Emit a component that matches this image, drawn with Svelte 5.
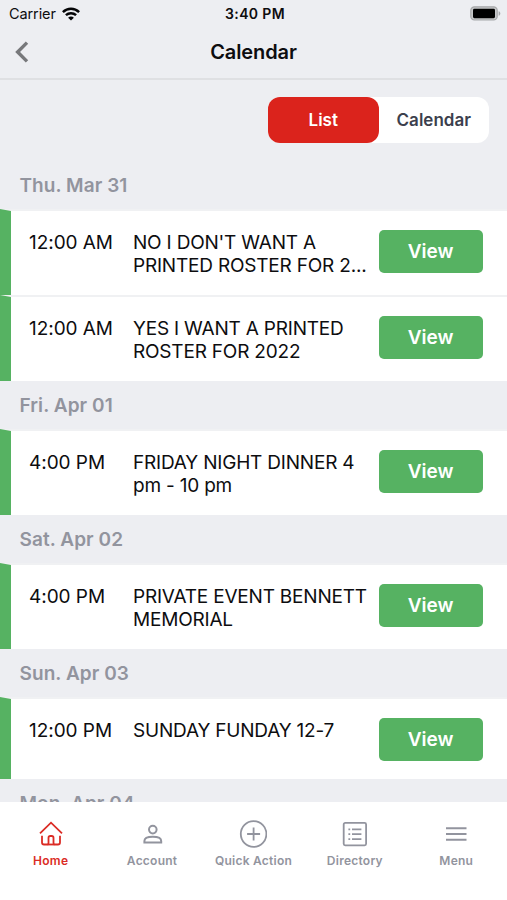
<script lang="ts">
  type CalendarEvent = { time: string; title: string };
  type Day = { label: string; events: CalendarEvent[] };

  const days: Day[] = [
    {
      label: 'Thu. Mar 31',
      events: [
        { time: '12:00 AM', title: "NO I DON'T WANT A PRINTED ROSTER FOR\u00a02..." },
        { time: '12:00 AM', title: 'YES I WANT A PRINTED ROSTER FOR 2022' },
      ],
    },
    { label: 'Fri. Apr 01', events: [{ time: '4:00 PM', title: 'FRIDAY NIGHT DINNER 4 pm - 10 pm' }] },
    { label: 'Sat. Apr 02', events: [{ time: '4:00 PM', title: 'PRIVATE EVENT BENNETT MEMORIAL' }] },
    { label: 'Sun. Apr 03', events: [{ time: '12:00 PM', title: 'SUNDAY FUNDAY 12-7' }] },
    { label: 'Mon. Apr 04', events: [] },
  ];

  const tabs = ['Home', 'Account', 'Quick Action', 'Directory', 'Menu'];

  let activeTab = $state('Home');
  let view = $state('List');
</script>

<div class="screen">
  <div class="status">
    <div class="status-left">
      <span class="carrier">Carrier</span>
      <svg width="18" height="14" viewBox="0 0 18 14" fill="none" stroke="#050507" stroke-width="2.5">
        <path d="M.9 5.1C5.5.7 12.5.7 17.1 5.1" />
        <path d="M3.9 8.2c2.9-2.7 7.3-2.7 10.2 0" />
        <path d="M9 13.6 6.1 10.7c1.7-1.5 4.1-1.5 5.8 0Z" fill="#050507" stroke="none" />
      </svg>
    </div>
    <span class="clock">3:40 PM</span>
    <div class="status-right">
      <svg width="31" height="15" viewBox="0 0 31 15">
        <rect x=".8" y=".8" width="26.4" height="13.2" rx="3.6" fill="#c6c7c9" stroke="#a6a7a9" stroke-width="1.2" />
        <rect x="3" y="2.8" width="22" height="9.4" rx="1.4" fill="#000" />
        <path d="M28.6 5.2c2.3.7 2.3 3.8 0 4.5Z" fill="#a6a7a9" />
      </svg>
    </div>
  </div>

  <header class="nav">
    <button class="back" aria-label="Back">
      <svg width="14" height="22" viewBox="0 0 14 22" fill="none" stroke="#77787b" stroke-width="3.4">
        <path d="M12 1.6 2.6 11l9.4 9.4" />
      </svg>
    </button>
    <h1>Calendar</h1>
  </header>

  <main class="content">
    <div class="toggle-row">
      <div class="toggle">
        {#each ['List', 'Calendar'] as option}
          <button class:selected={view === option} onclick={() => (view = option)}>{option}</button>
        {/each}
      </div>
    </div>

    {#each days as day (day.label)}
      <h2>{day.label}</h2>
      {#each day.events as event}
        <article class="event">
          <span class="time">{event.time}</span>
          <p class="title">{event.title}</p>
          <button class="view">View</button>
        </article>
      {/each}
    {/each}
  </main>

  <nav class="tabs">
    {#each tabs as tab}
      <button class="tab" class:active={activeTab === tab} onclick={() => (activeTab = tab)}>
        <svg width="28" height="28" viewBox="0 0 28 28" fill="none" stroke="currentColor" stroke-width="1.8">
          {#if tab === 'Home'}
            <path d="M3 13.4 14 2.7l11 10.7" />
            <path d="M5 15.7v6.8c0 1.4.6 2 2 2h3.2c.8 0 1.3-.5 1.3-1.3v-5.4c0-1.2.6-1.8 1.8-1.8h1.4c1.2 0 1.8.6 1.8 1.8v5.4c0 .8.5 1.3 1.3 1.3h3.2c1.4 0 2-.6 2-2v-6.8" />
            <path d="M10.5 24.5h7" />
          {:else if tab === 'Account'}
            <circle cx="14.8" cy="9.6" r="3.8" stroke-width="2" />
            <path d="M6.4 22.4v-1.4c0-2.8 4.1-4.2 8.4-4.2s8.4 1.4 8.4 4.2v1.4Z" stroke-width="2" />
          {:else if tab === 'Quick Action'}
            <circle cx="14.6" cy="14" r="12.8" />
            <path d="M14.6 7.5v13M8.1 14h13" />
          {:else if tab === 'Directory'}
            <rect x="2.7" y="2.9" width="22.4" height="22.4" rx="1.5" />
            <path d="M11 9.3h9.4M11 14.2h9.4M11 19.1h9.4M7.4 9.3h1.8M7.4 14.2h1.8M7.4 19.1h1.8" />
          {:else}
            <path d="M4 8.3h20.5M4 14h20.5M4 19.7h20.5" stroke-width="2.1" />
          {/if}
        </svg>
        <span>{tab}</span>
      </button>
    {/each}
  </nav>
</div>

<style>
  :global(body) {
    overflow: hidden;
  }
  .screen {
    display: flex;
    flex-direction: column;
    width: 507px;
    height: 900px;
    background: #edeef2;
    color: #0d0d0f;
    font-family: Inter, 'Liberation Sans', sans-serif;
  }
  button {
    border: none;
    padding: 0;
    background: none;
    font: inherit;
    cursor: pointer;
  }
  .status {
    display: grid;
    grid-template-columns: 1fr auto 1fr;
    align-items: center;
    height: 27px;
    padding: 0 6px 0 9px;
    flex-shrink: 0;
  }
  .status-left {
    display: flex;
    align-items: center;
    gap: 6px;
  }
  .carrier {
    font-size: 14.5px;
    letter-spacing: -0.1px;
  }
  .clock {
    font-size: 14px;
    font-weight: 600;
    letter-spacing: 0.35px;
  }
  .status-right {
    display: flex;
    justify-content: flex-end;
  }
  .nav {
    display: grid;
    grid-template-columns: 40px 1fr 40px;
    align-items: center;
    height: 50px;
    padding-bottom: 1px;
    border-bottom: 2px solid #dfe0e3;
    flex-shrink: 0;
  }
  .back {
    display: flex;
    padding-left: 15px;
  }
  h1 {
    margin: 0;
    text-align: center;
    font-size: 20px;
    font-weight: 600;
    letter-spacing: -0.1px;
  }
  .content {
    flex: 1;
    min-height: 0;
    overflow: hidden;
  }
  .toggle-row {
    display: flex;
    justify-content: flex-end;
    padding: 17px 18px 18px 0;
  }
  .toggle {
    display: flex;
    width: 221px;
    height: 46px;
    border-radius: 12px;
    background: #fff;
  }
  .toggle button {
    flex: 1;
    border-radius: 12px;
    color: #3c3f4d;
    font-size: 17px;
    font-weight: 600;
  }
  .toggle .selected {
    background: #db231c;
    color: #fff;
  }
  h2 {
    height: 48px;
    margin: 0;
    padding-left: 19.5px;
    color: #92949e;
    font-size: 19px;
    font-weight: 600;
    line-height: 50px;
    letter-spacing: 0.07px;
  }
  .event {
    display: grid;
    grid-template-columns: 104px 239px 104px;
    align-items: start;
    padding: 19px 0 18px 18px;
    /* thick left border meets the thin top one in a slanted corner */
    border-top: 2px solid #f0f1f3;
    border-left: 11px solid #56b262;
    background: #fff;
    background-clip: padding-box;
  }
  .time,
  .title {
    padding-top: 1px;
    font-size: 19px;
    line-height: 23px;
    letter-spacing: -0.05px;
  }
  .title {
    display: -webkit-box;
    margin: 0;
    overflow: hidden;
    letter-spacing: -0.2px;
    -webkit-box-orient: vertical;
    -webkit-line-clamp: 2;
    line-clamp: 2;
  }
  .view {
    width: 104px;
    height: 43px;
    margin-left: 6.5px;
    border-radius: 5px;
    background: #56b262;
    color: #fff;
    font-size: 19px;
    font-weight: 600;
  }
  .tabs {
    display: grid;
    grid-template-columns: repeat(5, 1fr);
    height: 98px;
    background: #fff;
    flex-shrink: 0;
  }
  .tab {
    display: flex;
    flex-direction: column;
    align-items: center;
    gap: 4px;
    padding-top: 18px;
    color: #92949e;
    font-size: 12px;
    font-weight: 600;
    line-height: 17px;
    white-space: nowrap;
    letter-spacing: 0.25px;
  }
  .active {
    color: #db2c25;
  }
</style>
